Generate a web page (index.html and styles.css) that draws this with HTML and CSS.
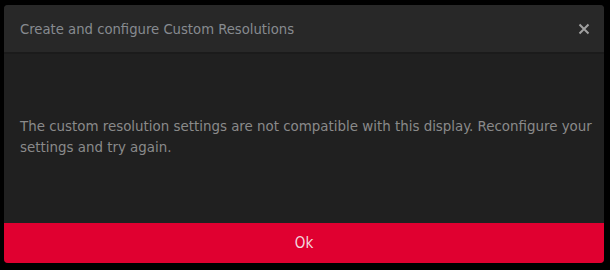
FILE: index.html
```html
<!DOCTYPE html>
<html>
<head>
<meta charset="utf-8">
<link rel="stylesheet" href="styles.css">
</head>
<body>
<div class="dialog">
  <div class="header">
    <span class="title">Create and configure Custom Resolutions</span>
    <button class="close" aria-label="Close">
      <svg width="12" height="12" viewBox="0 0 12 12"><path d="M1.5 1.5 L10.5 10.5 M10.5 1.5 L1.5 10.5" stroke="#a0a0a0" stroke-width="2" stroke-linecap="butt"/></svg>
    </button>
  </div>
  <div class="body">
    <p class="message">The custom resolution settings are not compatible with this display. Reconfigure your settings and try again.</p>
  </div>
  <button class="ok">Ok</button>
</div>
</body>
</html>
```
FILE: styles.css
```css
html, body {
  margin: 0;
  padding: 0;
  background: #000;
  width: 610px;
  height: 270px;
  overflow: hidden;
}
body {
  padding: 5px 6px 7px 4px;
  box-sizing: border-box;
}
.dialog {
  width: 600px;
  height: 258px;
  display: flex;
  flex-direction: column;
  border-radius: 4px;
  overflow: hidden;
  background: #202020;
  font-family: "DejaVu Sans Condensed", "DejaVu Sans", sans-serif;
}
.header {
  height: 47px;
  background: #282828;
  border-bottom: 2px solid #1b1b1b;
  display: flex;
  align-items: center;
  justify-content: space-between;
  padding: 0 10px 0 16px;
  flex-shrink: 0;
}
.title {
  color: #878b90;
  font-size: 14.7px;
}
.close {
  background: none;
  border: 0;
  padding: 0;
  width: 20px;
  height: 20px;
  display: flex;
  align-items: center;
  justify-content: center;
}
.body {
  flex: 1;
  display: flex;
  align-items: center;
  padding: 0 10px 0 16px;
}
.message {
  margin: 0 0 3px;
  color: #8a8a8a;
  font-size: 14.9px;
  line-height: 21px;
}
.ok {
  height: 40px;
  border: 0;
  background: #e00030;
  color: #f2d8de;
  font-family: inherit;
  font-size: 15px;
  flex-shrink: 0;
}
```
